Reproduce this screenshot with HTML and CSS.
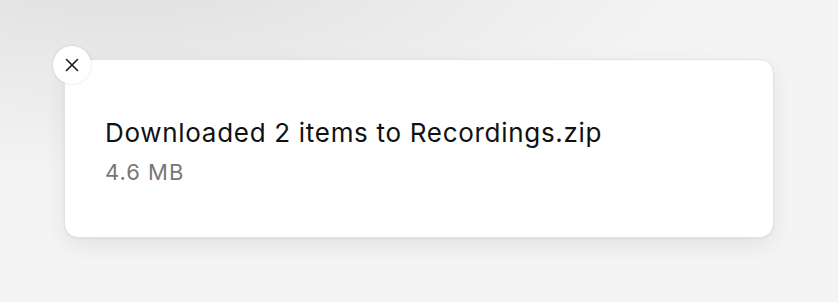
FILE: index.html
```html
<!DOCTYPE html>
<html>
<head>
<meta charset="utf-8">
<link rel="stylesheet" href="styles.css">
</head>
<body>
<div class="stage">
  <div class="toast">
    <button class="close" aria-label="Close">
      <svg width="14" height="14" viewBox="0 0 14 14"><path d="M1.5 1.5 L12.5 12.5 M12.5 1.5 L1.5 12.5" stroke="#1a1a1a" stroke-width="1.6" stroke-linecap="round" fill="none"/></svg>
    </button>
    <div class="title">Downloaded 2 items to Recordings.zip</div>
    <div class="meta">4.6 MB</div>
  </div>
</div>
</body>
</html>
```
FILE: styles.css
```css
html, body {
  margin: 0;
  height: 100%;
}
body {
  background: radial-gradient(ellipse 700px 260px at 120px -40px, #dedede 0%, #e9e9e9 40%, #f3f3f3 80%, #f4f4f4 100%);
  background-color: #f4f4f4;
  font-family: Inter, "Noto Sans", sans-serif;
  overflow: hidden;
}
.stage {
  padding: 59px 0 0 64px;
}
.toast {
  position: relative;
  box-sizing: border-box;
  width: 710px;
  height: 179px;
  background: #fff;
  border-radius: 14px;
  border: 1px solid #e3e3e3;
  box-shadow: 0 8px 22px rgba(0, 0, 0, 0.07), 0 1px 2px rgba(0, 0, 0, 0.05);
  padding: 57px 0 0 40px;
}
.close {
  position: absolute;
  top: -14px;
  left: -12px;
  width: 38px;
  height: 38px;
  border-radius: 50%;
  border: none;
  background: #fff;
  box-shadow: 0 0 3px rgba(0, 0, 0, 0.12);
  display: flex;
  align-items: center;
  justify-content: center;
  padding: 0;
}
.title {
  font-size: 26px;
  line-height: 32px;
  color: #111;
  letter-spacing: 0.7px;
}
.meta {
  margin-top: 10px;
  font-size: 22px;
  line-height: 26px;
  color: #777;
  letter-spacing: 1px;
}
```
